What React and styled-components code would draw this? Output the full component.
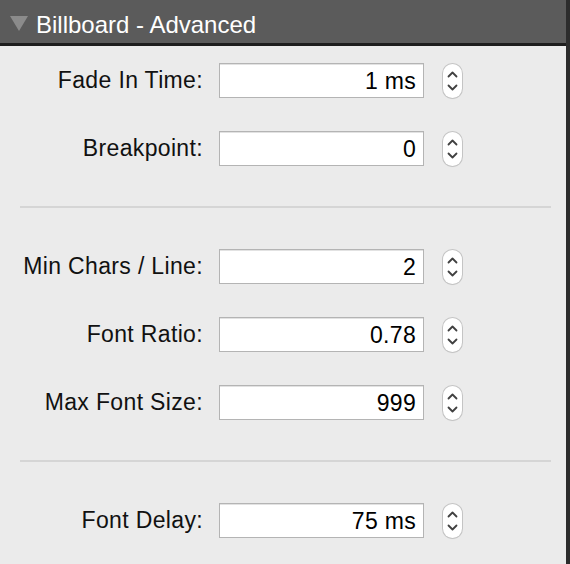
import React from "react";
import styled, { createGlobalStyle } from "styled-components";

const GlobalStyle = createGlobalStyle`
  html, body {
    margin: 0;
    padding: 0;
    background: #ebebeb;
  }
  body {
    font-family: "Liberation Sans", Arial, sans-serif;
  }
`;

const Window = styled.div`
  display: flex;
  width: 570px;
  height: 564px;
  overflow: hidden;
`;

const Panel = styled.div`
  flex: 1;
  display: flex;
  flex-direction: column;
  background: #ebebeb;
`;

const Edge = styled.div`
  width: 4px;
  background: #2c2c2c;
`;

const Header = styled.div`
  display: flex;
  align-items: center;
  box-sizing: border-box;
  height: 46px;
  padding: 3px 0 0 10px;
  background: #5b5b5b;
  border-bottom: 3px solid #1d1d1d;
`;

const Title = styled.span`
  margin: 4px 0 0 8px;
  color: #ffffff;
  font-size: 24px;
  line-height: 1;
`;

const Content = styled.div`
  padding-top: 17px;
`;

const Section = styled.div`
  display: flex;
  flex-direction: column;
  gap: 33px;
`;

const Separator = styled.div`
  height: 2px;
  margin: 40px 15px 41px 20px;
  background: #d5d5d5;
`;

const Row = styled.div`
  display: flex;
  align-items: center;
  height: 35px;
`;

const Label = styled.label`
  width: 203px;
  margin-right: 16px;
  text-align: right;
  font-size: 23px;
  letter-spacing: 0.35px;
  color: #111;
  white-space: nowrap;
`;

const Field = styled.div`
  width: 205px;
  height: 35px;
  box-sizing: border-box;
  display: flex;
  align-items: center;
  justify-content: flex-end;
  padding: 1px 7px 0 0;
  background: #ffffff;
  border: 1px solid #b4b4b4;
  box-shadow: inset 0 1px 0 #e2e2e2;
  font-size: 23px;
  letter-spacing: 0.3px;
  color: #000;
`;

const Stepper = styled.div`
  width: 19px;
  height: 34px;
  margin-left: 19px;
  box-sizing: border-box;
  border-radius: 10px;
  background: #ffffff;
  box-shadow: 0 0 0 1px #c4c4c4, 0 1px 1px rgba(0, 0, 0, 0.12);
  display: flex;
  align-items: center;
  justify-content: center;
`;

function Chevrons() {
  return (
    <svg width="19" height="34" viewBox="0 0 19 34">
      <path
        d="M5.5 12.5 L9.5 8.5 L13.5 12.5"
        fill="none"
        stroke="#404040"
        strokeWidth="1.8"
        strokeLinecap="round"
        strokeLinejoin="round"
      />
      <path
        d="M5.5 21.5 L9.5 25.5 L13.5 21.5"
        fill="none"
        stroke="#404040"
        strokeWidth="1.8"
        strokeLinecap="round"
        strokeLinejoin="round"
      />
    </svg>
  );
}

function Disclosure() {
  return (
    <svg width="18" height="15" viewBox="0 0 18 15">
      <polygon points="0,0 18,0 9,15" fill="#8b8b8b" />
    </svg>
  );
}

const sections = [
  [
    { label: "Fade In Time:", value: "1 ms" },
    { label: "Breakpoint:", value: "0" },
  ],
  [
    { label: "Min Chars / Line:", value: "2" },
    { label: "Font Ratio:", value: "0.78" },
    { label: "Max Font Size:", value: "999" },
  ],
  [{ label: "Font Delay:", value: "75 ms" }],
];

function NumberRow({ label, value }) {
  return (
    <Row>
      <Label>{label}</Label>
      <Field>{value}</Field>
      <Stepper>
        <Chevrons />
      </Stepper>
    </Row>
  );
}

export default function App() {
  return (
    <>
      <GlobalStyle />
      <Window>
        <Panel>
          <Header>
            <Disclosure />
            <Title>Billboard - Advanced</Title>
          </Header>
          <Content>
            {sections.map((rows, i) => (
              <React.Fragment key={i}>
                {i > 0 && <Separator />}
                <Section>
                  {rows.map((r) => (
                    <NumberRow key={r.label} {...r} />
                  ))}
                </Section>
              </React.Fragment>
            ))}
          </Content>
        </Panel>
        <Edge />
      </Window>
    </>
  );
}
